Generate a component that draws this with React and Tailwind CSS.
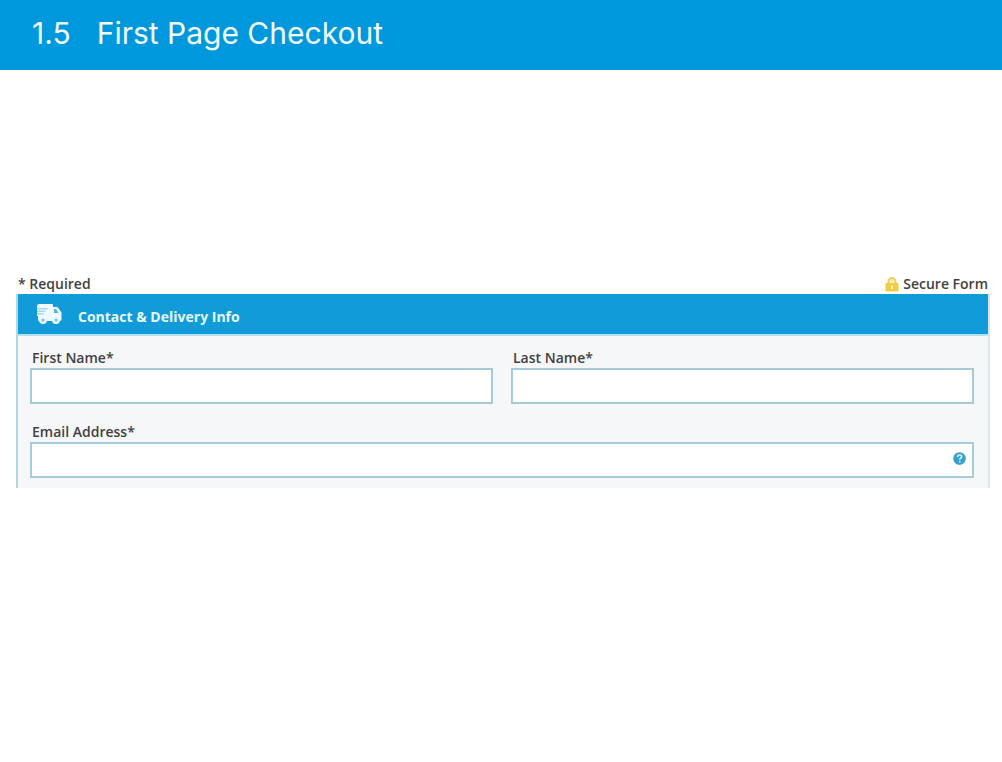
const TruckIcon = ({ className }) => (
  <svg viewBox="0 0 26 22" className={className} aria-hidden="true">
    <path
      d="M3 1h13a1 1 0 0 1 1 1v2h3.500c.7 0 1.200.3 1.600.8l3 4.200c.3.400.4.8.4 1.300V16c0 1-.7 2-1.700 2H3.500C2.500 18 2 17.500 2 16.500V13H1V3c0-1 1-2 2-2z"
      fill="#effcff"
    />
    <path d="M18 6h2l2.500 4H18z" fill="#4fb5e4" />
    <path d="M1 5h11l-1 1.500H1zM1 7.500h9l-1 1.500H1zM1 10h7l-1 1.500H1z" fill="#a5d9f3" />
    <circle cx="7" cy="17" r="4" fill="#effcff" />
    <circle cx="20" cy="17" r="4" fill="#effcff" />
    <circle cx="7" cy="17" r="1.500" fill="#6cc0e8" />
    <circle cx="20" cy="17" r="1.500" fill="#6cc0e8" />
  </svg>
)

const LockIcon = ({ className }) => (
  <svg viewBox="0 0 14 15" className={className} aria-hidden="true">
    <path d="M3.500 7V4.500a3.500 3.500 0 0 1 7 0V7" fill="#f8ebb4" stroke="#ecd06a" strokeWidth="2" />
    <rect x="0.500" y="6" width="13" height="8.500" rx="1" fill="#f0cd46" />
    <path d="M7 8.500v3.500" stroke="#fff3b8" strokeWidth="2" />
  </svg>
)

const Field = ({ id, label, type = "text", children }) => (
  <div className="min-w-0 flex-1">
    <label htmlFor={id} className="block px-[2px] text-sm leading-5 font-semibold">
      {label}
    </label>
    <div className="relative">
      <input
        id={id}
        type={type}
        className="block h-9 w-full border-2 border-[#a6cbd8] bg-white px-2 text-sm outline-none focus:border-[#129bd9]"
      />
      {children}
    </div>
  </div>
)

const HelpButton = () => (
  <button
    type="button"
    aria-label="Help with email address"
    className="absolute top-[10px] right-2 h-[13px] w-[13px]"
  >
    <svg viewBox="0 0 13 13" className="block h-full w-full" aria-hidden="true">
      <circle cx="6.500" cy="6.500" r="6.300" fill="#369fd0" />
      <path
        d="M4.500 5c0-2.600 4.200-2.600 4.200-.2 0 1.400-2 1.500-2 3M6.700 9v1.500"
        fill="none"
        stroke="#dff5fd"
        strokeWidth="1.600"
      />
    </svg>
  </button>
)

const App = () => {
  return (
    <div className="min-h-screen bg-white font-['Open_Sans',sans-serif] text-[#433f42]">
      <header className="flex h-[70px] items-center bg-[#0098dc] px-8 pb-1">
        <h1 className="flex gap-[26px] font-['Inter',sans-serif] text-[30px] leading-9 font-normal text-[#f0fcff]">
          <span>1.5</span>
          <span>First Page Checkout</span>
        </h1>
      </header>

      <main className="mt-[204px] pr-3 pl-4">
        <div className="flex items-center justify-between px-[2px] text-sm leading-5 font-semibold">
          <p>* Required</p>
          <p className="flex items-center gap-1">
            <LockIcon className="h-[15px] w-[14px]" />
            Secure Form
          </p>
        </div>

        <form className="border-r-2 border-l-2 border-r-[#d5e9ee] border-l-[#b0d7e4] bg-[#f6f7f8]">
          <div className="flex h-[42px] items-center gap-4 border-b-2 border-[#b5e2f3] bg-[#129bd9] px-[18px]">
            <TruckIcon className="h-[22px] w-[26px]" />
            <h2 className="pt-[5px] text-sm leading-5 font-bold text-[#e8faff]">
              Contact &amp; Delivery Info
            </h2>
          </div>

          <div className="flex flex-col gap-[18px] pt-3 pr-[14px] pb-[10px] pl-3">
            <div className="flex gap-[18px]">
              <Field id="first-name" label="First Name*" />
              <Field id="last-name" label="Last Name*" />
            </div>
            <Field id="email" label="Email Address*" type="email">
              <HelpButton />
            </Field>
          </div>
        </form>
      </main>
    </div>
  )
}

export default App
